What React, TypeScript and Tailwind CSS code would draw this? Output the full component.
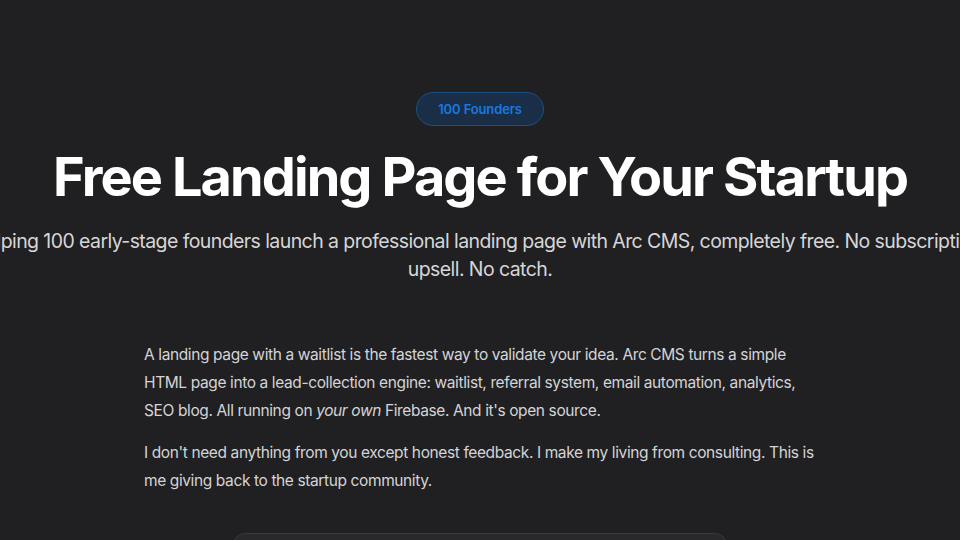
import React from 'react';

const App = () => {
  return (
    <div
      className="min-h-screen w-full overflow-hidden bg-[#202022] text-white"
      style={{ fontFamily: 'Inter, "Noto Sans", sans-serif' }}
    >
      <section className="flex flex-col items-center pt-[92px]">
        <span className="rounded-full border border-[#1d4f85] bg-[#1a2f47] px-[21px] py-[7px] text-[13px] font-semibold leading-[18px] tracking-[-0.01em] text-[#1778e0]">
          100 Founders
        </span>

        <h1 className="mt-[19px] text-[54px] font-bold leading-[64px] tracking-[-0.035em] text-white">
          Free Landing Page for Your Startup
        </h1>

        <p className="mt-[18px] whitespace-nowrap text-center text-[19.5px] leading-7 tracking-[-0.03em] text-[#d6d6d8]">
          I'm helping 100 early-stage founders launch a professional landing page with Arc CMS, completely free. No subscription. No
          <br />
          upsell. No catch.
        </p>

        <div className="mt-[58px] w-full max-w-2xl text-[15.5px] leading-7 tracking-[-0.025em] text-[#d4d4d6]">
          <p className="mb-3.5">
            A landing page with a waitlist is the fastest way to validate your idea. Arc CMS turns a simple
            HTML page into a lead-collection engine: waitlist, referral system, email automation, analytics,
            SEO blog. All running on <em>your own</em> Firebase. And it's open source.
          </p>
          <p>
            I don't need anything from you except honest feedback. I make my living from consulting. This is
            me giving back to the startup community.
          </p>
        </div>

        <div className="mt-[38px] h-[80px] w-[494px] rounded-xl border border-[#3a3a3d] bg-[#29292b]" />
      </section>
    </div>
  );
};

export default App;
